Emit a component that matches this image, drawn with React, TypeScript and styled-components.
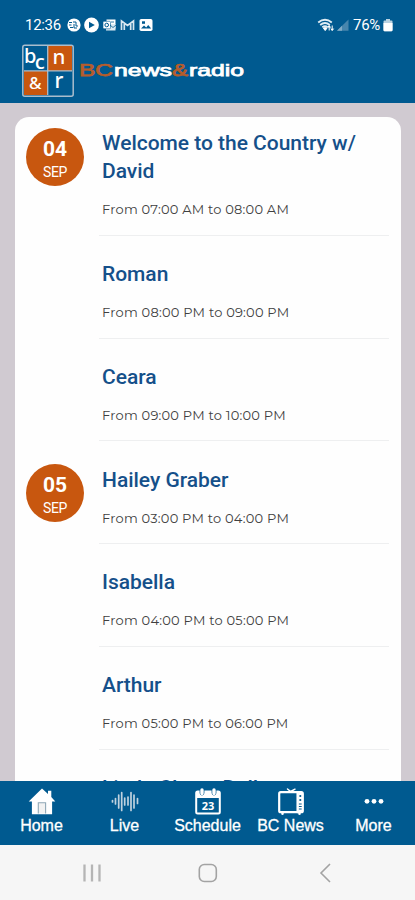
import React from 'react';
import styled, { createGlobalStyle } from 'styled-components';

const BLUE = '#005a90';
const ORANGE = '#c8570f';

const GlobalStyle = createGlobalStyle`
  * { box-sizing: border-box; }
  body { margin: 0; background: #d0cad1; font-family: Roboto, "Liberation Sans", sans-serif; }
`;

const Screen = styled.div`
  width: 415px;
  height: 900px;
  display: flex;
  flex-direction: column;
  overflow: hidden;
  background: #d0cad1;
`;

const Header = styled.header`
  height: 103px;
  flex: none;
  background: ${BLUE};
  color: #fff;
`;

const StatusBar = styled.div`
  height: 44px;
  padding: 5px 22px 0 25px;
  display: flex;
  align-items: center;
  justify-content: space-between;
`;

const StatusGroup = styled.div<{ $gap: number }>`
  display: flex;
  align-items: center;
  gap: ${p => p.$gap}px;
`;

const StatusText = styled.span<{ $width: number }>`
  width: ${p => p.$width}px;
  font-size: 15px;
  line-height: 18px;
  white-space: nowrap;
  letter-spacing: -0.3px;
`;

const Brand = styled.div`
  display: flex;
  align-items: center;
  gap: 4px;
  padding-left: 22px;
`;

const Content = styled.main`
  flex: 1;
  min-height: 0;
  padding: 14px 14px 0 15px;
`;

const Card = styled.section`
  height: 100%;
  overflow: hidden;
  padding: 12px 12px 0 11px;
  background: #fefefe;
  border-radius: 14px 14px 0 0;
`;

const Day = styled.div`
  display: grid;
  grid-template-columns: 73px 1fr;
`;

const DateBadge = styled.div<{ $offset: number }>`
  width: 58px;
  height: 58px;
  margin-top: ${p => p.$offset}px;
  padding-top: 9px;
  border-radius: 50%;
  background: ${ORANGE};
  color: #fff;
  text-align: center;
`;

const DayNumber = styled.div`
  font-size: 21px;
  font-weight: 700;
  line-height: 24px;
`;

const Month = styled.div`
  font-size: 14px;
  line-height: 23px;
  font-weight: 400;
  letter-spacing: -0.3px;
`;

const Show = styled.article<{ $first?: boolean }>`
  padding: ${p => (p.$first ? 0.3 : 24.3)}px 0 14.5px 3px;
  border-bottom: 1px solid #eeeff0;
`;

const ShowTitle = styled.h2`
  margin: 0 0 14px;
  font-size: 21px;
  line-height: 28px;
  font-weight: 500;
  letter-spacing: -0.02px;
  color: #15508a;
`;

const ShowTime = styled.p`
  margin: 0;
  height: 21px;
  line-height: 21px;
  font-family: Montserrat, Inter, sans-serif;
  font-size: 13px;
  letter-spacing: 0.22px;
  white-space: nowrap;
  color: #404040;
`;

const TabBar = styled.nav`
  height: 64px;
  flex: none;
  display: grid;
  grid-template-columns: repeat(5, 1fr);
  background: ${BLUE};
  color: #fff;
`;

const Tab = styled.a`
  display: flex;
  flex-direction: column;
  align-items: center;
  padding-top: 6px;
  svg { display: block; flex: none; }
`;

const TabLabel = styled.span`
  margin-top: 1px;
  font-family: "Liberation Sans", Arial, sans-serif;
  font-size: 16px;
  line-height: 18px;
  white-space: nowrap;
  -webkit-text-stroke: 0.3px #fff;
`;

const SystemNav = styled.footer`
  height: 55px;
  flex: none;
  display: flex;
  align-items: center;
  padding-left: 81px;
  gap: 95px;
  background: #f6f6f6;
`;

const StatusIcons = () => (
  <svg width="88" height="16" viewBox="0 0 88 16" fill="none">
    <circle cx="8" cy="8" r="6.6" fill="#fff" />
    <path d="M3 5.5h3M3 8h2.5M4 10.5h3M7 5h3v4h2M8 7v4h3" stroke={BLUE} strokeWidth="1" />
    <circle cx="25.5" cy="8" r="7.4" fill="#fff" />
    <path d="M23 4.8v6.4L28.8 8z" fill={BLUE} />
    <rect x="40.5" y="2.5" width="9" height="9" fill="#fff" />
    <path d="M40 7h9.5v6.5H40z" fill="#dceaf3" />
    <rect x="37" y="4.3" width="7.5" height="7.5" rx="1" fill="#fff" stroke={BLUE} strokeWidth=".6" />
    <circle cx="40.7" cy="8" r="1.8" stroke={BLUE} />
    <path d="m44 8 3 2.5L50 8M45 5h3" stroke={BLUE} strokeWidth=".8" />
    <path d="M55.500 13V4l6 4.500 6-4.500v9M58.300 13V6.300M64.700 13V6.300" stroke="#d8e7f0" strokeWidth="1.700" />
    <rect x="73.500" y="2" width="13" height="12" rx="1.800" fill="#fff" />
    <path d="m75 11.500 3-3 2.200 2 2-2.600 3 3.600z" fill={BLUE} />
    <path d="M76 4.300h3v2.500h-3z" fill={BLUE} />
  </svg>
);

const SignalIcons = () => (
  <svg width="33" height="16" viewBox="0 0 33 16" fill="none">
    <path d="M1.200 5.500Q8 .2 14.800 5.500M3.200 8q4.800-3.800 9.600 0M5.300 10.200q2.700-2 5.400 0" stroke="#e1edf4" strokeWidth="1.900" />
    <path d="m6.400 11.200 1.800 2.400 1.800-2.400q-1.800-1.200-3.600 0zM12.200 13.500V8.800m-1.400 1.700 1.400-1.900 1.400 1.900M15.200 8.500v4.800m-1.400-1.600 1.400 1.800 1.400-1.800" fill="#fff" stroke="#fff" />
    <path d="M20 13.800 31.500 2.400v11.400z" fill="#4786ad" />
    <path d="m20 13.800 5-5v5z" fill="#80acc7" />
  </svg>
);

const Battery = () => (
  <svg width="10" height="14" viewBox="0 0 10 14">
    <path d="M3 1h4v1.500h1.500q1 0 1 1V12q0 1.200-1.200 1.200H1.700Q.5 13.200.5 12V3.500q0-1 1-1H3z" fill="#b9d2e1" />
    <path d="M.5 5h9v7q0 1.200-1.200 1.200H1.700Q.5 13.200.5 12z" fill="#fff" />
  </svg>
);

const LogoMark = () => (
  <svg width="52" height="54" viewBox="0 0 52 54" fontFamily="Noto Sans, sans-serif" fontWeight="500" fill="#fff">
    <rect x=".8" y="1.300" width="50.400" height="50.900" rx="2" fill={BLUE} />
    <path d="M26 2h24v25H26zM2 27h24v24H2z" fill={ORANGE} />
    <rect x=".8" y="1.300" width="50.400" height="50.900" rx="2" fill="none" stroke="#a9bdcd" strokeWidth="1.500" />
    <path d="M25.700 2v49M2 26.800h48" stroke="#a9bdcd" strokeWidth="1.300" />
    <text x="2" y="18.800" fontSize="20">b</text>
    <text x="12.800" y="24.600" fontSize="20.500">c</text>
    <text x="30.500" y="20" fontSize="20.500">n</text>
    <text x="7" y="44.500" fontSize="17">&amp;</text>
    <text x="32.500" y="44" fontSize="21">r</text>
  </svg>
);

const Wordmark = () => (
  <svg width="168" height="24" viewBox="0 0 168 24" fontFamily="Liberation Sans, sans-serif" fontSize="16.500" fontWeight="400" strokeWidth=".75">
    <text x="1" y="16.500" textLength="34" lengthAdjust="spacingAndGlyphs" fill="#b65d2c" stroke="#b65d2c">BC</text>
    <text x="36" y="16.500" textLength="58" lengthAdjust="spacingAndGlyphs" fill="#fff" stroke="#fff">news</text>
    <text x="94" y="16.500" textLength="16" lengthAdjust="spacingAndGlyphs" fill="#b65d2c" stroke="#b65d2c">&amp;</text>
    <text x="111" y="16.500" textLength="55" lengthAdjust="spacingAndGlyphs" fill="#fff" stroke="#fff">radio</text>
  </svg>
);

const HomeIcon = () => (
  <svg width="28" height="29" viewBox="0 0 28 29">
    <path d="M14 1.500 20 7V3.800h3.300v6.300l4 4.400h-3.200v12.700H3.900V14.500H.7z" fill="#fff" />
    <path d="M10.300 26.500V15.700h7.300v10.800" fill="#f2f2f2" stroke="#90a8b6" strokeWidth="1.100" />
  </svg>
);

const LiveIcon = () => (
  <svg width="28" height="29" viewBox="0 0 28 29" stroke="#bfd2df" strokeWidth="1.700" strokeLinecap="round">
    <path d="M1.500 13.500v1.500M4.500 11.500v5.500M7.700 8v13M10.700 5.500v18M13.700 11v7M17 10v8M20 5.500v18M23 8v13M26.500 11.500v5" />
  </svg>
);

const CalendarIcon = () => (
  <svg width="28" height="29" viewBox="0 0 28 29" fill="none">
    <rect x="2.200" y="4.500" width="23.600" height="22" rx="1.500" stroke="#fff" strokeWidth="2" />
    <path d="M2 4.500h24v6.500H2z" fill="#fff" />
    <path d="M8 2.500v3.500M20 2.500v3.500" stroke={BLUE} strokeWidth="4.800" strokeLinecap="round" />
    <path d="M8 3v3.500M20 3v3.500" stroke="#fff" strokeWidth="3.400" strokeLinecap="round" />
    <text x="14" y="22.500" textAnchor="middle" fontFamily="Noto Sans, sans-serif" fontSize="11" fontWeight="700" fill="#fff">23</text>
  </svg>
);

const TvIcon = () => (
  <svg width="28" height="29" viewBox="0 0 28 29" fill="none" stroke="#fff" strokeLinecap="round">
    <path d="m10.500 2 3.200 2.500L18 2.200" strokeWidth="1.500" />
    <rect x="2.200" y="5.200" width="23.600" height="20" rx="1.500" strokeWidth="2.200" />
    <path d="M20.700 6v19" strokeWidth="2.500" />
    <path d="M22 6h3.500v19H22z" fill="#fff" strokeWidth=".5" />
    <circle cx="23.300" cy="9" r="1.100" fill={BLUE} stroke="none" />
    <circle cx="23.300" cy="13" r="1.100" fill={BLUE} stroke="none" />
    <path d="M22.300 17h2M22.300 19.500h2M22.300 22h2" stroke={BLUE} strokeWidth="1" />
    <path d="M5.500 26v.7M22.500 26v.7" strokeWidth="2.500" />
  </svg>
);

const MoreIcon = () => (
  <svg width="28" height="29" viewBox="0 0 28 29" fill="#fff">
    <circle cx="7" cy="14.300" r="2.400" /><circle cx="14" cy="14.300" r="2.400" /><circle cx="21" cy="14.300" r="2.400" />
  </svg>
);

type ShowItem = { title: string; time?: string };

const days: { day: string; offset: number; shows: ShowItem[] }[] = [
  { day: '04', offset: -1, shows: [
    { title: 'Welcome to the Country w/ David', time: 'From 07:00 AM to 08:00 AM' },
    { title: 'Roman', time: 'From 08:00 PM to 09:00 PM' },
    { title: 'Ceara', time: 'From 09:00 PM to 10:00 PM' },
  ] },
  { day: '05', offset: 23, shows: [
    { title: 'Hailey Graber', time: 'From 03:00 PM to 04:00 PM' },
    { title: 'Isabella', time: 'From 04:00 PM to 05:00 PM' },
    { title: 'Arthur', time: 'From 05:00 PM to 06:00 PM' },
    { title: 'Linda Chase Dell' },
  ] },
];

const tabs = [
  { label: 'Home', Icon: HomeIcon },
  { label: 'Live', Icon: LiveIcon },
  { label: 'Schedule', Icon: CalendarIcon },
  { label: 'BC News', Icon: TvIcon },
  { label: 'More', Icon: MoreIcon },
];

export default function App() {
  return (
    <Screen>
      <GlobalStyle />
      <Header>
        <StatusBar>
          <StatusGroup $gap={4}>
            <StatusText $width={37}>12:36</StatusText>
            <StatusIcons />
          </StatusGroup>
          <StatusGroup $gap={3}>
            <SignalIcons />
            <StatusText $width={27}>76%</StatusText>
            <Battery />
          </StatusGroup>
        </StatusBar>
        <Brand><LogoMark /><Wordmark /></Brand>
      </Header>
      <Content>
        <Card>
          {days.map((d, di) => (
            <Day key={d.day}>
              <DateBadge $offset={d.offset}>
                <DayNumber>{d.day}</DayNumber>
                <Month>SEP</Month>
              </DateBadge>
              <div>
                {d.shows.map((s, si) => (
                  <Show key={s.title} $first={di === 0 && si === 0}>
                    <ShowTitle>{s.title}</ShowTitle>
                    {s.time && <ShowTime>{s.time}</ShowTime>}
                  </Show>
                ))}
              </div>
            </Day>
          ))}
        </Card>
      </Content>
      <TabBar>
        {tabs.map(({ label, Icon }) => (
          <Tab key={label}><Icon /><TabLabel>{label}</TabLabel></Tab>
        ))}
      </TabBar>
      <SystemNav>
        <svg width="21" height="20" viewBox="0 0 21 20" stroke="#b5b5b5" strokeWidth="2.300"><path d="M3.500 1.500v17M11 1.500v17M18.500 1.500v17" /></svg>
        <svg width="21" height="20" viewBox="0 0 21 20" fill="none" stroke="#a3a3a3" strokeWidth="1.600"><rect x="2.300" y="1.500" width="17" height="17" rx="5" /></svg>
        <svg width="21" height="20" viewBox="0 0 21 20" fill="none" stroke="#a3a3a3" strokeWidth="1.600"><path d="m17 1-9 9 9 9" /></svg>
      </SystemNav>
    </Screen>
  );
}
